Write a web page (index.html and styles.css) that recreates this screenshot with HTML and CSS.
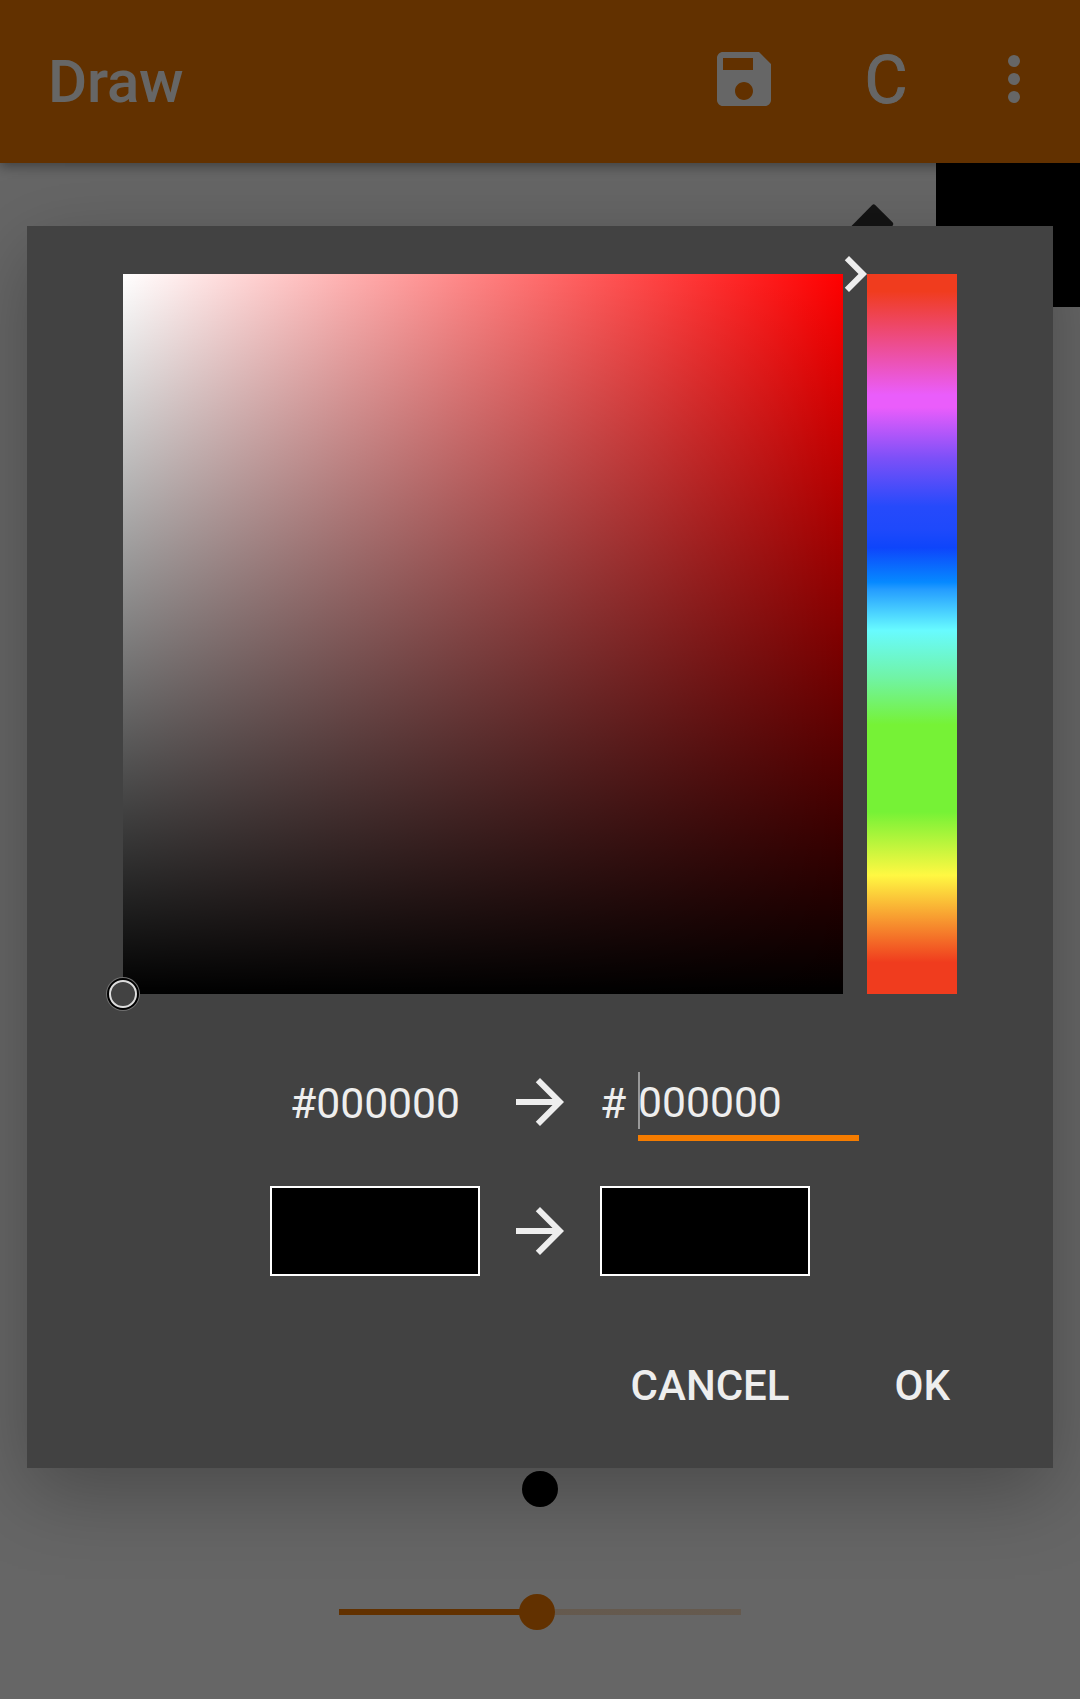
FILE: index.html
```
<!DOCTYPE html>
<html lang="en">
<head>
<meta charset="utf-8">
<title>Draw</title>
<link rel="stylesheet" href="styles.css">
</head>
<body>
<div class="screen">
  <header class="app-bar">
    <h1 class="title">Draw</h1>
    <svg class="icon" viewBox="0 0 24 24"><path d="M17 3H5c-1.11 0-2 .9-2 2v14c0 1.1.89 2 2 2h14c1.1 0 2-.9 2-2V7l-4-4zm-5 16c-1.66 0-3-1.34-3-3s1.34-3 3-3 3 1.34 3 3-1.34 3-3 3zm3-10H5V5h10v4z"/></svg>
    <span class="clear">C</span>
    <svg class="icon" viewBox="0 0 24 24"><circle cx="12" cy="6" r="2"/><circle cx="12" cy="12" r="2"/><circle cx="12" cy="18" r="2"/></svg>
  </header>
  <main class="canvas">
    <div class="tools">
      <svg class="pen" viewBox="0 0 48 48"><path d="M0 23.5 22.2 1Q23.7-.5 25.2 1L42.5 18.3Q44 20 42.5 21.8L20 44z"/></svg>
      <div class="current"></div>
    </div>
    <div class="size">
      <div class="brush"></div>
      <div class="slider"><div class="filled"></div><div class="thumb"></div></div>
    </div>
  </main>
</div>
<div class="scrim">
  <section class="dialog">
    <div class="picker">
      <div class="shade">
        <div class="ring"></div>
        <svg class="pointer" viewBox="0 0 24 24"><path d="M10 6 8.59 7.41 13.17 12l-4.58 4.59L10 18l6-6z"/></svg>
      </div>
      <div class="hue"></div>
    </div>
    <div class="codes">
      <span class="old">#000000</span>
      <svg class="icon" viewBox="0 0 24 24"><path d="M12 4l-1.41 1.41L16.17 11H4v2h12.17l-5.58 5.59L12 20l8-8z"/></svg>
      <span class="hash">#</span>
      <div class="field"><span>000000</span></div>
    </div>
    <div class="swatches">
      <div class="swatch"></div>
      <svg class="icon" viewBox="0 0 24 24"><path d="M12 4l-1.41 1.41L16.17 11H4v2h12.17l-5.58 5.59L12 20l8-8z"/></svg>
      <div class="swatch"></div>
    </div>
    <div class="actions"><span>CANCEL</span><span>OK</span></div>
  </section>
</div>
</body>
</html>
```
FILE: styles.css
```
* { box-sizing: border-box; }
body { margin: 0; font-family: Roboto, sans-serif; background: #fff; }
.screen { width: 1080px; height: 1699px; display: flex; flex-direction: column; overflow: hidden; }
.icon { width: 72px; height: 72px; fill: currentColor; flex: none; }

.app-bar {
  height: 163px; flex: none; display: flex; align-items: center;
  padding: 0 30px 5px 48px; background: #f57c00; color: #fff;
  box-shadow: 0 3px 12px rgba(0, 0, 0, .4);
}
.title { margin: 5px auto 0 0; font-size: 60px; line-height: 70px; font-weight: 500; letter-spacing: -.2px; }
.clear { width: 198px; font-size: 66px; line-height: 72px; text-align: center; padding: 4px 0 0 14px; -webkit-text-stroke: 1px #fff; }

.canvas { flex: 1; display: flex; flex-direction: column; justify-content: space-between; }
.tools { display: flex; justify-content: flex-end; }
.pen { width: 48px; height: 48px; margin: 41px 38px 0 0; fill: #333; }
.current { width: 144px; height: 144px; background: #000; }
.size { display: flex; flex-direction: column; align-items: center; padding-bottom: 69px; }
.brush { width: 36px; height: 36px; border-radius: 50%; background: #000; margin-bottom: 87px; }
.slider { width: 402px; height: 36px; display: flex; align-items: center; background: linear-gradient(rgba(245, 124, 0, .24), rgba(245, 124, 0, .24)) center / 100% 6px no-repeat; }
.filled { width: 182px; height: 6px; background: #f57c00; }
.thumb { width: 36px; height: 36px; margin-left: -2px; border-radius: 50%; background: #f57c00; }

.scrim { position: absolute; inset: 0; height: 1699px; overflow: hidden; background: rgba(0, 0, 0, .6); padding: 226px 27px 0; }
.dialog {
  height: 1242px; padding: 48px 96px 0; background: #424242; color: #eee;
  box-shadow: 0 24px 76px rgba(0, 0, 0, .28);
}
.picker { display: flex; gap: 24px; }
.shade { position: relative; width: 720px; height: 720px; background: linear-gradient(transparent, #000), linear-gradient(to right, #fff, #f00); }
.ring {
  position: absolute; left: -14px; bottom: -14px; width: 28px; height: 28px; border-radius: 50%;
  background: #424242; border: 2px solid #ddd; box-shadow: 0 0 0 2px #000, 0 0 0 3px #707070;
}
.pointer { position: absolute; left: 696px; top: -36px; width: 72px; height: 72px; fill: #eee; }
.hue {
  width: 90px; height: 720px;
  background: linear-gradient(#f03c1e 0, #f03c1e 2.4%, #ea5dfb 16.8%, #ea5dfb 18.5%, #7c50f8 25.6%, #264afb 32.3%, #1e49fb 35.5%, #0e45fb 38%, #0689ff 42.8%, #249cff 43.8%, #68fbff 49.5%, #70f4a8 55.9%, #76f236 62.6%, #76f236 74.7%, #fff842 83.5%, #f03c1e 95.6%);
}
.codes { display: flex; align-items: center; height: 72px; margin-top: 72px; padding-left: 147px; font-size: 42.67px; line-height: 50px; }
.old { width: 210px; text-align: center; padding-top: 1px; }
.codes .icon { margin: 0 24px; }
.hash { width: 38px; padding-top: 1px; }
.field { width: 221px; height: 78px; padding-top: 9px; border-bottom: 6px solid #f57c00; }
.field span { display: block; height: 57px; line-height: 61px; border-left: 2px solid #999; text-indent: -2px; }
.swatches { display: flex; align-items: center; justify-content: center; gap: 24px; margin-top: 48px; }
.swatch { width: 210px; height: 90px; background: #000; border: 2px solid #fff; }
.actions { display: flex; justify-content: flex-end; gap: 105px; margin-top: 85px; padding-right: 7px; font-size: 42px; line-height: 50px; font-weight: 500; }
```
